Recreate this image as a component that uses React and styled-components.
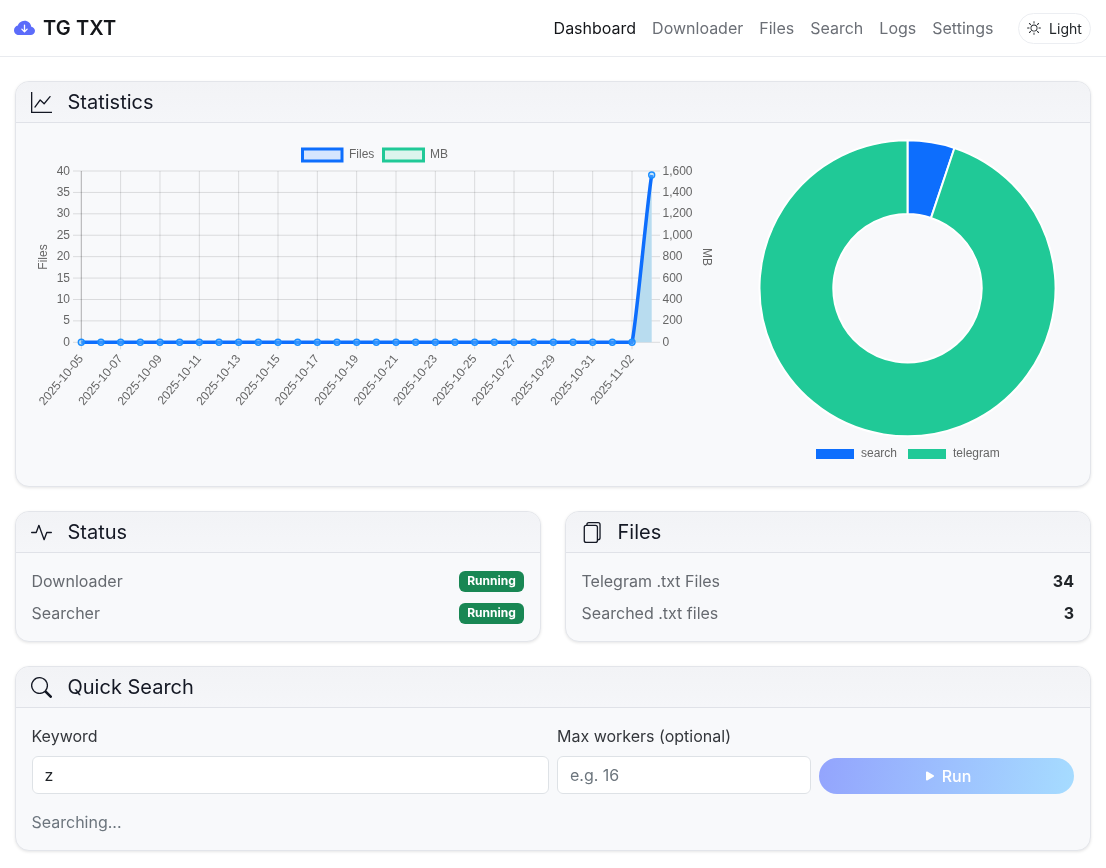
import React from 'react'
import styled, { createGlobalStyle } from 'styled-components'
import {
  BsActivity,
  BsCloudArrowDownFill,
  BsFiles,
  BsGraphUp,
  BsPlayFill,
  BsSearch,
  BsSun
} from 'react-icons/bs'

const GlobalStyle = createGlobalStyle`
  * {
    box-sizing: border-box;
  }

  body {
    margin: 0;
    background: #fff;
    color: #212529;
    font-family: Inter, "Liberation Sans", sans-serif;
    font-size: 16px;
    line-height: 24px;
  }

  #root {
    will-change: transform;
  }
`

const TopBar = styled.header`
  height: 57px;
  padding: 0 15px 0 14px;
  display: flex;
  align-items: center;
  justify-content: space-between;
  background: #fff;
  border-bottom: 1px solid #e9ebef;
`

const Brand = styled.div`
  display: flex;
  align-items: center;
  gap: 8px;
  font-size: 20px;
  font-weight: 600;
  letter-spacing: 0.1px;
  color: #14161a;

  svg {
    color: #5c6cfa;
    font-size: 21px;
  }
`

const NavArea = styled.div`
  display: flex;
  align-items: center;
`

const Nav = styled.nav`
  display: flex;
  gap: 16px;
  margin-right: 24.5px;
`

const NavLink = styled.a`
  font-size: 16px;
  color: ${props => (props.$active ? '#14161a' : '#6b6f76')};
`

const ThemeButton = styled.button`
  width: 73px;
  height: 31px;
  padding: 0;
  display: flex;
  align-items: center;
  justify-content: center;
  gap: 8px;
  background: #fff;
  border: 1px solid #eceef2;
  border-radius: 16px;
  color: #212529;
  font-family: inherit;
  font-size: 14px;
`

const Main = styled.main`
  padding: 24px 15px 16px;
  display: flex;
  flex-direction: column;
  gap: 24px;
`

const Card = styled.section`
  background: #f8f9fb;
  border: 1px solid #e3e5ea;
  border-radius: 14px;
  box-shadow: 0 1px 3px rgba(0, 0, 0, 0.1);
  overflow: hidden;
`

const CardHeader = styled.div`
  height: 41px;
  padding: 0 15px;
  display: flex;
  align-items: center;
  gap: 15.5px;
  background: linear-gradient(180deg, #f2f3f6 0%, #f5f6f9 100%);
  border-bottom: 1px solid #e0e2e8;
  color: #141824;
  font-size: 20px;

  svg {
    font-size: 21px;
    flex: none;
  }
`

const StatsBody = styled.div`
  padding: 16px 15px;
  display: grid;
  grid-template-columns: 700px 1fr;
`

const ChartSvg = styled.svg`
  display: block;
  width: ${props => props.$w}px;
  height: 331px;
`

const TwoColumns = styled.div`
  display: grid;
  grid-template-columns: 1fr 1fr;
  gap: 24px;
`

const ListBody = styled.div`
  padding: 12px 16px 12px 15.5px;
`

const InfoRow = styled.div`
  height: 32px;
  display: flex;
  align-items: center;
  justify-content: space-between;
  color: #666a70;
`

const Badge = styled.span`
  height: 21px;
  width: 65px;
  display: flex;
  align-items: center;
  justify-content: center;
  background: #198754;
  border-radius: 6px;
  color: #fff;
  font-size: 12px;
  font-weight: 700;
`

const Count = styled.strong`
  color: #212529;
  font-weight: 700;
`

const SearchBody = styled.div`
  padding: 16px 16px 16px 15.5px;
`

const SearchGrid = styled.form`
  display: grid;
  grid-template-columns: 517.5px 254px 1fr;
  grid-template-rows: 24px 38px;
  gap: 8px;
  align-items: end;
`

const FieldLabel = styled.label`
  color: #33363b;
  line-height: 24px;
`

const TextInput = styled.input`
  width: 100%;
  height: 38px;
  padding: 0 12px;
  background: #fff;
  border: 1px solid #dee2e6;
  border-radius: 6px;
  color: #212529;
  font-family: inherit;
  font-size: 16px;

  &::placeholder {
    color: #6c757d;
    opacity: 1;
  }
`

const RunButton = styled.button`
  grid-column: 3;
  height: 36px;
  display: flex;
  align-items: center;
  justify-content: center;
  gap: 4px;
  background: linear-gradient(100deg, #93a4fd 0%, #a6dcff 100%);
  border: 0;
  border-radius: 18px;
  color: #fff;
  font-family: inherit;
  font-size: 16px;
  font-weight: 500;
`

const SearchNote = styled.div`
  margin-top: 16px;
  color: #6c757d;
`

const TickText = styled.text`
  fill: #666;
  font-family: "Liberation Sans", Arial, sans-serif;
  font-size: 12px;
`

const GridLine = styled.line`
  stroke: rgba(0, 0, 0, 0.12);
  stroke-width: 1;
`

const left = 81.3
const right = 651.7
const top = 171
const bottom = 342.3
const stepX = (right - left) / 29
const stepY = (bottom - top) / 8

const xAt = i => left + i * stepX

const fmtDate = i => {
  const d = new Date(Date.UTC(2025, 9, 5 + i))
  return d.toISOString().slice(0, 10)
}

const leftTicks = [40, 35, 30, 25, 20, 15, 10, 5, 0]
const rightTicks = ['1,600', '1,400', '1,200', '1,000', '800', '600', '400', '200', '0']
const days = Array.from({ length: 30 }, (_, i) => i)
const labelled = days.filter(i => i % 2 === 0 && i < 29)

function LineChart() {
  const peakY = 175
  // the last stretch bends a little, the rest of the line sits on zero
  const rise = `C${xAt(28) + 4.5} ${bottom - 20} ${right - 5} 205 ${right} ${peakY}`

  return (
    <ChartSvg $w={700} viewBox="31 139 700 331">
      <rect x="302.5" y="149" width="39.5" height="12" fill="#d6e6fe" stroke="#0d6efd" strokeWidth="3" />
      <TickText x="349" y="158">Files</TickText>
      <rect x="383.5" y="149" width="40" height="12" fill="#dcf5ed" stroke="#20c997" strokeWidth="3" />
      <TickText x="430" y="158">MB</TickText>

      {leftTicks.map((t, i) => (
        <g key={t}>
          <GridLine x1={73} x2={660} y1={top + i * stepY} y2={top + i * stepY} />
          <TickText x="70" y={top + i * stepY + 3.5} textAnchor="end">{t}</TickText>
          <TickText x="662.5" y={top + i * stepY + 3.5}>{rightTicks[i]}</TickText>
        </g>
      ))}
      {labelled.map(i => (
        <g key={i}>
          <GridLine x1={xAt(i)} x2={xAt(i)} y1={top} y2={bottom + 7} />
          <TickText
            textAnchor="end"
            transform={`translate(${xAt(i) + 2.5} 359) rotate(-50)`}
          >
            {fmtDate(i)}
          </TickText>
        </g>
      ))}
      <line x1={left} x2={left} y1={top} y2={bottom} stroke="rgba(0,0,0,0.2)" />

      <TickText transform="translate(47 257) rotate(-90)" textAnchor="middle">Files</TickText>
      <TickText transform="translate(703 257) rotate(90)" textAnchor="middle">MB</TickText>

      <path d={`M${xAt(28)} ${bottom}${rise}L${right} ${bottom}Z`} fill="#b8dcef" />
      <path d={`M${left} ${bottom}L${xAt(28)} ${bottom}${rise}`} fill="none" stroke="#0d6efd" strokeWidth="3.5" />
      {days.map(i => (
        <circle
          key={i}
          cx={xAt(i)}
          cy={i === 29 ? peakY : bottom}
          r="3"
          fill="rgba(120, 200, 255, 0.4)"
          stroke="#1b8eff"
          strokeWidth="1.4"
        />
      ))}
    </ChartSvg>
  )
}

const polar = (r, deg, cx, cy) => {
  const a = ((deg - 90) * Math.PI) / 180
  return [cx + r * Math.cos(a), cy + r * Math.sin(a)]
}

const ringSlice = (from, to, cx, cy, outer, inner) => {
  const large = to - from > 180 ? 1 : 0
  const [ax, ay] = polar(outer, from, cx, cy)
  const [bx, by] = polar(outer, to, cx, cy)
  const [dx, dy] = polar(inner, to, cx, cy)
  const [ex, ey] = polar(inner, from, cx, cy)
  return `M${ax} ${ay}A${outer} ${outer} 0 ${large} 1 ${bx} ${by}L${dx} ${dy}A${inner} ${inner} 0 ${large} 0 ${ex} ${ey}Z`
}

function DoughnutChart() {
  const cx = 907.5
  const cy = 288.3
  return (
    <ChartSvg $w={344} viewBox="731 139 344 331">
      <path d={ringSlice(0, 18.5, cx, cy, 148, 74.2)} fill="#0d6efd" stroke="#fff" strokeWidth="2" />
      <path d={ringSlice(18.5, 360, cx, cy, 148, 74.2)} fill="#20c997" stroke="#fff" strokeWidth="2" />
      <rect x="816" y="449" width="38" height="10" fill="#0d6efd" />
      <TickText x="861" y="457">search</TickText>
      <rect x="908" y="449" width="38" height="10" fill="#20c997" />
      <TickText x="953" y="457">telegram</TickText>
    </ChartSvg>
  )
}

export default function App() {
  return (
    <>
      <GlobalStyle />
      <TopBar>
        <Brand>
          <BsCloudArrowDownFill />
          TG TXT
        </Brand>
        <NavArea>
          <Nav>
            <NavLink $active>Dashboard</NavLink>
            <NavLink>Downloader</NavLink>
            <NavLink>Files</NavLink>
            <NavLink>Search</NavLink>
            <NavLink>Logs</NavLink>
            <NavLink>Settings</NavLink>
          </Nav>
          <ThemeButton type="button">
            <BsSun />
            Light
          </ThemeButton>
        </NavArea>
      </TopBar>

      <Main>
        <Card>
          <CardHeader>
            <BsGraphUp />
            Statistics
          </CardHeader>
          <StatsBody>
            <LineChart />
            <DoughnutChart />
          </StatsBody>
        </Card>

        <TwoColumns>
          <Card>
            <CardHeader>
              <BsActivity />
              Status
            </CardHeader>
            <ListBody>
              <InfoRow>
                Downloader
                <Badge>Running</Badge>
              </InfoRow>
              <InfoRow>
                Searcher
                <Badge>Running</Badge>
              </InfoRow>
            </ListBody>
          </Card>
          <Card>
            <CardHeader>
              <BsFiles />
              Files
            </CardHeader>
            <ListBody>
              <InfoRow>
                Telegram .txt Files
                <Count>34</Count>
              </InfoRow>
              <InfoRow>
                Searched .txt files
                <Count>3</Count>
              </InfoRow>
            </ListBody>
          </Card>
        </TwoColumns>

        <Card>
          <CardHeader>
            <BsSearch />
            Quick Search
          </CardHeader>
          <SearchBody>
            <SearchGrid>
              <FieldLabel>Keyword</FieldLabel>
              <FieldLabel>Max workers (optional)</FieldLabel>
              <span />
              <TextInput defaultValue="z" />
              <TextInput placeholder="e.g. 16" />
              <RunButton type="button" disabled>
                <BsPlayFill />
                Run
              </RunButton>
            </SearchGrid>
            <SearchNote>Searching...</SearchNote>
          </SearchBody>
        </Card>
      </Main>
    </>
  )
}
